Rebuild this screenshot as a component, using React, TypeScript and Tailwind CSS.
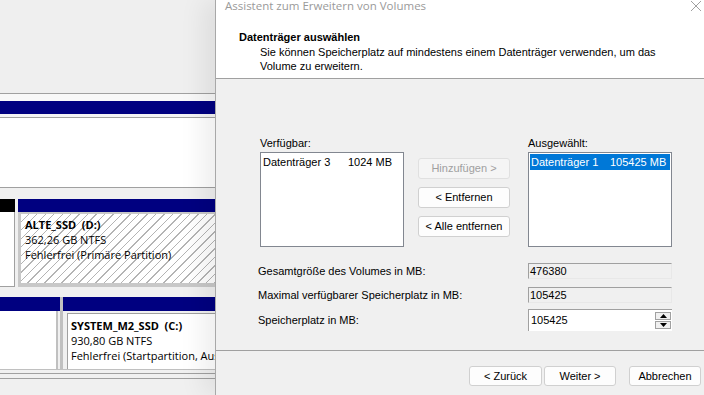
import React from 'react';

const dlg = "font-['Liberation_Sans',Arial,sans-serif] text-[11px] text-black";
const seg = "font-['Open_Sans',sans-serif] text-[11px] text-black";

function WinButton({ label, disabled, className }: { label: string; disabled?: boolean; className?: string }) {
  return (
    <div
      className={`flex items-center justify-center rounded-[3px] border ${
        disabled ? 'border-[#e0e0e0] bg-[#f5f5f5] text-[#a0a0a0]' : 'border-[#d0d0d0] bg-[#fdfdfd] text-black'
      } ${className ?? ''}`}
    >
      {label}
    </div>
  );
}

function ListBox({ rows, selected }: { rows: [string, string][]; selected?: boolean }) {
  return (
    <div className="w-[144px] h-[95px] border border-[#828790] bg-white p-px">
      {rows.map(([name, size]) => (
        <div
          key={name}
          className={`flex h-[16px] items-center pl-px ${selected ? 'bg-[#0078d7] text-white' : ''}`}
        >
          <span className={selected ? 'w-[79px]' : 'w-[85px]'}>{name}</span>
          <span>{size}</span>
        </div>
      ))}
    </div>
  );
}

function DiskPanel() {
  return (
    <div className={`w-[215px] shrink-0 flex flex-col bg-[#f0f0f0] ${seg}`}>
      {/* upper disk row remnant */}
      <div className="h-[93px] bg-[#efefef]" />
      <div className="h-px bg-[#a0a0a0]" />
      <div className="h-[7px] bg-[#f8f8f8]" />
      <div className="h-[13px] bg-[#000080]" />
      <div className="h-[3px] bg-[#f4f4f4]" />
      <div className="h-px bg-[#a0a0a0]" />
      <div className="h-[69px] bg-white" />
      <div className="h-px bg-[#a0a0a0]" />
      <div className="h-[11px] bg-[#f0f0f0]" />

      {/* ALTE_SSD row */}
      <div className="flex h-[88px]">
        <div className="w-[15px] shrink-0 flex flex-col">
          <div className="h-[13px] bg-black" />
          <div className="flex-1 bg-white border-r border-b border-[#a0a0a0]" />
        </div>
        <div className="w-[3px] shrink-0" />
        <div className="flex-1 min-w-0 flex flex-col">
          <div className="h-[13px] bg-[#000080]" />
          <div className="flex-1 bg-[#c8c8c8] pl-[3px] pt-[2px] pb-[4px]">
            <div className="h-full bg-[repeating-linear-gradient(135deg,#ffffff_0px,#ffffff_5px,#b4b4b4_5px,#b4b4b4_6px)] pl-[4px] pt-[3px] leading-[15px]">
              <div className="font-bold">ALTE_SSD&nbsp;&nbsp;(D:)</div>
              <div>362,26 GB NTFS</div>
              <div>Fehlerfrei (Primäre Partition)</div>
            </div>
          </div>
        </div>
      </div>
      <div className="h-[10px] bg-[#f0f0f0]" />

      {/* SYSTEM row */}
      <div className="flex h-[72px]">
        <div className="w-[60px] shrink-0 flex flex-col">
          <div className="h-[14px] bg-[#000080]" />
          <div className="flex-1 bg-white border-r-2 border-[#c0c0c0] mr-[2px]" />
        </div>
        <div className="w-[3px] shrink-0 bg-[#c0c0c0]" />
        <div className="flex-1 min-w-0 flex flex-col">
          <div className="h-[14px] bg-[#000080]" />
          <div className="flex-1 pl-[4px] pt-[2px] min-w-0">
            <div className="h-full bg-white border-l border-t border-[#a0a0a0] pl-[3px] pt-[4px] leading-[15px] whitespace-nowrap overflow-hidden">
              <div className="font-bold">SYSTEM_M2_SSD&nbsp;&nbsp;(C:)</div>
              <div>930,80 GB NTFS</div>
              <div>Fehlerfrei (Startpartition, Auslagerungsdatei)</div>
            </div>
          </div>
        </div>
      </div>
      <div className="h-[4px] bg-[#f0f0f0] border-t border-[#c0c0c0]" />
      <div className="h-px bg-[#a0a0a0]" />
      <div className="h-[4px] bg-[#f0f0f0]" />
      <div className="h-px bg-[#a0a0a0]" />
      <div className="flex-1 bg-[#f0f0f0]" />
    </div>
  );
}

function Wizard() {
  return (
    <div className={`relative z-10 flex-1 flex flex-col border-l border-[#a8a8a8] bg-[#f0f0f0] shadow-[-12px_0_24px_rgba(0,0,0,0.07)] ${dlg}`}>
      {/* header */}
      <div className="h-[79px] bg-white border-b border-[#a0a0a0]">
        <div className="flex h-[12px] items-center justify-between pl-[9px] pr-[2px]">
          <span className="font-['Open_Sans',sans-serif] text-[11.5px] leading-[12px] text-[#9a9a9a]">
            Assistent zum Erweitern von Volumes
          </span>
          <svg width="12" height="12" viewBox="0 0 12 12" className="-mt-[1px]">
            <path d="M1 1L11 11M11 1L1 11" stroke="#a0a0a0" strokeWidth="1" />
          </svg>
        </div>
        <div className="pl-[23px] pt-[19px] font-bold leading-[13px]">Datenträger auswählen</div>
        <div className="pl-[44px] pt-[1px] leading-[14px]">
          Sie können Speicherplatz auf mindestens einem Datenträger verwenden, um das
          <br />
          Volume zu erweitern.
        </div>
      </div>

      {/* body */}
      <div className="h-[272px] border-b border-[#a0a0a0] pl-[42px] pt-[57px]">
        <div className="flex pl-[2px]">
          <div className="flex flex-col">
            <div className="h-[15px] leading-[15px] mb-px">Verfügbar:</div>
            <ListBox rows={[['Datenträger 3', '1024 MB']]} />
          </div>
          <div className="ml-[14px] mt-[22px] flex flex-col gap-[8px]">
            <WinButton label="Hinzufügen >" disabled className="w-[92px] h-[21px]" />
            <WinButton label="< Entfernen" className="w-[92px] h-[21px]" />
            <WinButton label="< Alle entfernen" className="w-[92px] h-[21px]" />
          </div>
          <div className="ml-[18px] flex flex-col">
            <div className="h-[15px] leading-[15px] mb-px">Ausgewählt:</div>
            <ListBox rows={[['Datenträger 1', '105425 MB']]} selected />
          </div>
        </div>

        <div className="mt-[16px] flex flex-col">
          <div className="flex h-[16px] items-center">
            <span className="w-[270px]">Gesamtgröße des Volumes in MB:</span>
            <div className="w-[144px] h-[16px] border-t border-l border-[#a0a0a0] border-r border-b border-r-[#e8e8e8] border-b-[#e8e8e8] bg-[#f0f0f0] pl-px leading-[14px]">
              476380
            </div>
          </div>
          <div className="mt-[8px] flex h-[16px] items-center">
            <span className="w-[270px]">Maximal verfügbarer Speicherplatz in MB:</span>
            <div className="w-[144px] h-[16px] border-t border-l border-[#a0a0a0] border-r border-b border-r-[#e8e8e8] border-b-[#e8e8e8] bg-[#f0f0f0] pl-px leading-[14px]">
              105425
            </div>
          </div>
          <div className="mt-[6px] flex h-[22px] items-center">
            <span className="w-[270px]">Speicherplatz in MB:</span>
            <div className="flex w-[144px] h-[22px] border-t border-l border-[#a0a0a0] bg-white">
              <div className="flex-1 pl-[2px] leading-[20px]">105425</div>
              <div className="w-[17px] flex flex-col gap-px py-[2px] pr-px bg-white">
                <div className="flex-1 flex items-center justify-center border border-[#a0a0a0] bg-[#f0f0f0]">
                  <svg width="7" height="4" viewBox="0 0 7 4"><path d="M3.5 0L7 4H0Z" fill="#000" /></svg>
                </div>
                <div className="flex-1 flex items-center justify-center border border-[#a0a0a0] bg-[#f0f0f0]">
                  <svg width="7" height="4" viewBox="0 0 7 4"><path d="M0 0H7L3.5 4Z" fill="#000" /></svg>
                </div>
              </div>
            </div>
          </div>
        </div>
      </div>

      {/* footer */}
      <div className="flex-1 pt-[15px] pl-[253px]">
        <div className="flex">
          <WinButton label="< Zurück" className="w-[73px] h-[20px]" />
          <WinButton label="Weiter >" className="ml-[2px] w-[72px] h-[20px]" />
          <WinButton label="Abbrechen" className="ml-[13px] w-[72px] h-[20px]" />
        </div>
      </div>
    </div>
  );
}

export default function App() {
  return (
    <div className="flex w-[704px] h-[395px] overflow-hidden bg-[#f0f0f0]">
      <DiskPanel />
      <Wizard />
    </div>
  );
}
